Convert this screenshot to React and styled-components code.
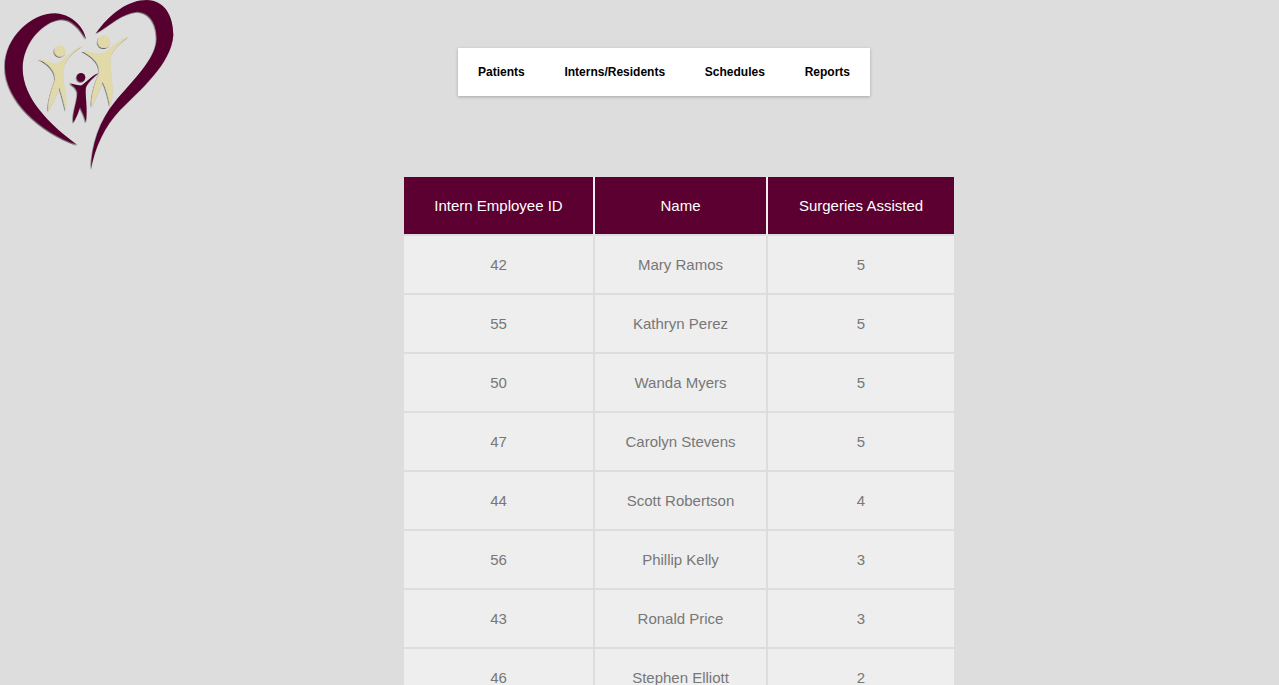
import React from "react";
import styled, { createGlobalStyle } from "styled-components";

const Global = createGlobalStyle`
  html, body { margin: 0; padding: 0; background: #dddddd; overflow: hidden; }
  body { font-family: "Liberation Sans", Arial, sans-serif; }
`;
const Page = styled.div`
  width: 1279px;
  height: 685px;
  overflow: hidden;
`;
const TopBar = styled.header`
  display: flex;
  align-items: flex-start;
  height: 177px;
`;
const LogoMark = styled.svg`
  width: 180px;
  height: 175px;
  flex: none;
  filter: blur(0.4px);
`;
const Nav = styled.nav`
  display: flex;
  align-items: center;
  justify-content: space-between;
  box-sizing: border-box;
  width: 412px;
  height: 48px;
  margin: 48px 0 0 278px;
  padding: 0 20px;
  background: #fff;
  box-shadow: 0 1px 3px rgba(0, 0, 0, 0.25);
`;
const NavLink = styled.a`
  color: #000;
  font-size: 12px;
  font-weight: 700;
  text-decoration: none;
`;
const Table = styled.table`
  width: 550px;
  margin-left: 404px;
  border-collapse: separate;
  border-spacing: 0;
  table-layout: fixed;
  font-size: 15px;
`;
const HeadCell = styled.th`
  height: 59px;
  padding: 0;
  background: #5b0030;
  background-clip: padding-box;
  color: #fff;
  font-weight: 400;
  text-align: center;
  border-right: 2px solid #eee;
  border-bottom: 2px solid #ddd;
  box-sizing: border-box;
  &:last-child { border-right: 0; }
`;
const Cell = styled.td`
  height: 59px;
  padding: 0;
  background: #eeeeee;
  background-clip: padding-box;
  color: #777;
  text-align: center;
  border-right: 2px solid #ddd;
  border-bottom: 2px solid #ddd;
  box-sizing: border-box;
  &:last-child { border-right: 0; }
`;

const rows = [
  [42, "Mary Ramos", 5],
  [55, "Kathryn Perez", 5],
  [50, "Wanda Myers", 5],
  [47, "Carolyn Stevens", 5],
  [44, "Scott Robertson", 4],
  [56, "Phillip Kelly", 3],
  [43, "Ronald Price", 3],
  [46, "Stephen Elliott", 2],
];

const Logo = () => (
  <LogoMark viewBox="0 0 540 525" aria-label="Logo">
    <defs>
      <filter id="sh" x="-10%" y="-10%" width="120%" height="120%">
        <feDropShadow dx="-2" dy="3" stdDeviation="2" floodColor="#000" floodOpacity="0.55" />
      </filter>
    </defs>
    <g filter="url(#sh)">
      <path fill="#55002f" d="M258 118 C250 75 210 42 165 40 C95 40 15 110 15 200 C15 300 120 395 232 435 C150 375 68 295 68 205 C68 130 130 62 185 58 C215 58 240 85 258 118 Z" />
      <path fill="#55002f" d="M288 100 C330 40 385 0 440 0 C495 0 520 50 520 105 C515 190 420 270 360 330 C315 378 285 440 273 508 C275 430 300 360 345 305 C400 240 470 175 470 115 C470 65 445 35 410 35 C370 38 330 75 288 100 Z" />
      <g fill="#e1d9a8">
        <circle cx="180" cy="153" r="17" />
        <path d="M115 177 C135 180 155 190 172 190 C195 178 220 145 248 137 C225 150 205 170 195 190 C188 215 188 240 195 265 C200 285 200 310 197 333 C192 310 185 285 178 262 C170 285 155 315 145 333 C142 300 158 265 165 240 C168 215 145 190 115 177 Z" />
        <circle cx="312" cy="125" r="19" />
        <path d="M245 153 C265 153 285 160 305 160 C335 150 355 115 387 108 C365 125 340 145 332 170 C330 200 338 240 338 270 C338 290 335 305 330 318 C325 290 318 265 308 245 C298 270 285 300 275 320 C272 290 285 250 295 225 C305 195 280 170 245 153 Z" />
      </g>
      <circle cx="243" cy="232" r="13" fill="#55002f" />
      <path fill="#55002f" d="M208 250 C220 252 232 257 245 256 C262 245 278 225 295 220 C282 232 265 245 258 262 C254 285 264 320 258 368 C254 350 247 335 240 322 C235 340 228 355 220 368 C216 340 232 305 232 280 C232 268 222 258 208 250 Z" />
    </g>
  </LogoMark>
);

export default function App() {
  return (
    <Page>
      <Global />
      <TopBar>
        <Logo />
        <Nav>
          <NavLink>Patients</NavLink>
          <NavLink>Interns/Residents</NavLink>
          <NavLink>Schedules</NavLink>
          <NavLink>Reports</NavLink>
        </Nav>
      </TopBar>
      <Table>
        <colgroup>
          <col style={{ width: 191 }} />
          <col style={{ width: 173 }} />
          <col style={{ width: 186 }} />
        </colgroup>
        <thead>
          <tr>
            <HeadCell>Intern Employee ID</HeadCell>
            <HeadCell>Name</HeadCell>
            <HeadCell>Surgeries Assisted</HeadCell>
          </tr>
        </thead>
        <tbody>
          {rows.map((r) => (
            <tr key={r[0]}>
              <Cell>{r[0]}</Cell>
              <Cell>{r[1]}</Cell>
              <Cell>{r[2]}</Cell>
            </tr>
          ))}
        </tbody>
      </Table>
    </Page>
  );
}
